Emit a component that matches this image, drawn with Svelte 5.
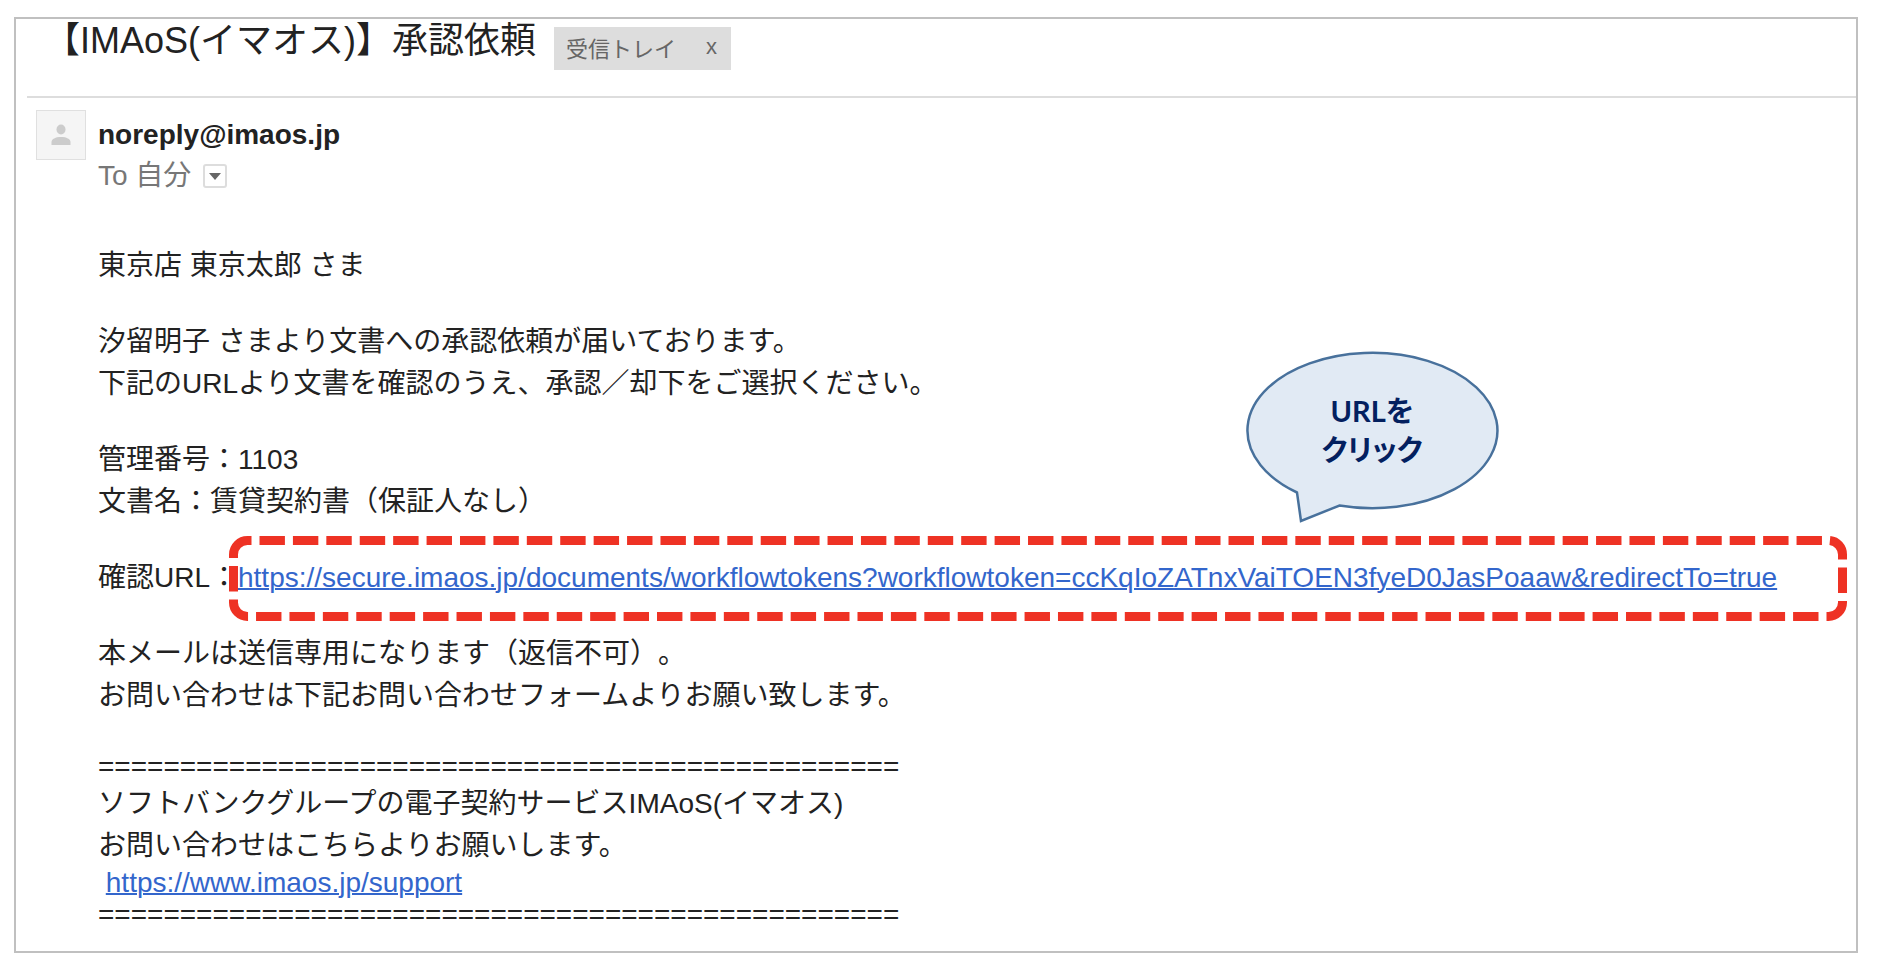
<script>
  const subject = '【IMAoS(イマオス)】承認依頼'
  const tokenUrl =
    'https://secure.imaos.jp/documents/workflowtokens?workflowtoken=ccKqIoZATnxVaiTOEN3fyeD0JasPoaaw&redirectTo=true'
  const supportUrl = 'https://www.imaos.jp/support'
  const rule = '='.repeat(49)

  const intro = [
    ['東京店 東京太郎 さま'],
    ['汐留明子 さまより文書への承認依頼が届いております。', '下記のURLより文書を確認のうえ、承認／却下をご選択ください。'],
    ['管理番号：1103', '文書名：賃貸契約書（保証人なし）'],
  ]
  const notice = ['本メールは送信専用になります（返信不可）。', 'お問い合わせは下記お問い合わせフォームよりお願い致します。']

  let labelled = true
</script>

<main class="mail">
  <header class="subject">
    <h1>{subject}</h1>
    {#if labelled}
      <span class="label">
        受信トレイ
        <button class="remove" aria-label="ラベルを削除" on:click={() => (labelled = false)}>x</button>
      </span>
    {/if}
  </header>

  <section class="sender">
    <div class="avatar">
      <svg viewBox="0 0 24 24" width="24" height="24">
        <ellipse cx="12" cy="6.5" rx="4.5" ry="5" />
        <path d="M2.500 22v-3c0-3 4-5 9.500-5s9.500 2 9.500 5v3z" />
      </svg>
    </div>
    <div class="who">
      <strong>noreply@imaos.jp</strong>
      <div class="to">
        To 自分
        <button class="details" aria-label="詳細を表示">
          <svg viewBox="0 0 12 8" width="12" height="8"><path d="M0 1h12L6 8z" /></svg>
        </button>
      </div>
    </div>
  </section>

  <article class="body">
    {#each intro as lines}
      <p>
        {#each lines as line}
          <span class="line">{line}</span>
        {/each}
      </p>
    {/each}

    <div class="confirm">
      確認URL：<a href={tokenUrl}>{tokenUrl}</a>
      <svg class="highlight"><rect x="4.500" y="4.500" rx="14" ry="14" pathLength="3344" /></svg>
      <div class="bubble">
        <svg viewBox="0 0 252 172" width="252" height="172">
          <path d="M51 141.500A125 77.700 0 1 1 93.500 154.500L55 170z" />
        </svg>
        <div class="bubble-text">URLを<br />クリック</div>
      </div>
    </div>

    <p>
      {#each notice as line}
        <span class="line">{line}</span>
      {/each}
    </p>

    <footer>
      <span class="line short">{rule}</span>
      <span class="line">ソフトバンクグループの電子契約サービスIMAoS(イマオス)</span>
      <span class="line">お問い合わせはこちらよりお願いします。</span>
      <span class="line short">&nbsp;<a href={supportUrl}>{supportUrl}</a></span>
      <span class="line short">{rule}</span>
    </footer>
  </article>
</main>

<style>
  :global(body) {
    margin: 0;
    background: #fff;
  }
  .mail {
    box-sizing: border-box;
    margin: 17px 42px 20px 14px;
    padding-bottom: 20px;
    border: 2px solid #c0c0c0;
    font-family: 'Liberation Sans', 'Noto Sans CJK JP', sans-serif;
    font-size: 28px;
    text-spacing-trim: space-all;
    color: #222;
  }
  .subject {
    display: flex;
    align-items: flex-start;
    gap: 18px;
    height: 77px;
    margin-left: 11px;
    padding-left: 17px;
    border-bottom: 2px solid #ddd;
  }
  h1 {
    margin: 0;
    font-size: 36px;
    font-weight: 400;
    line-height: 44px;
  }
  .label {
    display: flex;
    align-items: center;
    justify-content: space-between;
    box-sizing: border-box;
    width: 177px;
    height: 43px;
    margin-top: 8px;
    padding: 0 14px 4px 12px;
    font-size: 22px;
    color: #666;
    background: #ddd;
  }
  button {
    padding: 0;
    font: inherit;
    color: inherit;
    cursor: pointer;
  }
  .remove {
    border: 0;
    background: none;
  }
  .sender {
    display: flex;
    gap: 12px;
    padding: 12px 20px 0;
  }
  .avatar {
    display: flex;
    align-items: center;
    justify-content: center;
    box-sizing: border-box;
    width: 50px;
    height: 50px;
    border: 1px solid #e0e0e0;
    background: #f5f5f5;
    fill: #ccc;
  }
  .who {
    padding-top: 5px;
  }
  strong {
    display: block;
    line-height: 40px;
  }
  .to {
    display: flex;
    align-items: center;
    gap: 12px;
    line-height: 42px;
    color: #777;
  }
  .details {
    display: flex;
    align-items: center;
    justify-content: center;
    width: 24px;
    height: 24px;
    border: 2px solid #ddd;
    border-radius: 3px;
    background: #fff;
    fill: #666;
  }
  .body {
    display: flex;
    flex-direction: column;
    gap: 34px;
    margin-top: 48px;
    padding-left: 82px;
    line-height: 42px;
  }
  p {
    margin: 0;
  }
  .line {
    display: block;
    height: 42px;
  }
  .line.short {
    height: 32px;
    line-height: 32px;
  }
  a {
    color: #3366cc;
    text-decoration-thickness: 2px;
  }
  .confirm {
    position: relative;
    height: 42px;
    white-space: nowrap;
  }
  .highlight {
    position: absolute;
    top: -21px;
    left: 131px;
    width: calc(100% - 140px);
    height: 85px;
    pointer-events: none;
  }
  .highlight rect {
    width: calc(100% - 9px);
    height: calc(100% - 9px);
    fill: none;
    stroke: #ee3224;
    stroke-width: 9px;
    stroke-dasharray: 25.4 8;
    stroke-dashoffset: 21.4;
  }
  .bubble {
    position: absolute;
    bottom: 76px;
    left: 1148px;
    width: 252px;
    height: 172px;
  }
  .bubble svg {
    overflow: visible;
  }
  .bubble path {
    fill: #e1eaf4;
    stroke: #48719c;
    stroke-width: 2.5px;
    stroke-linejoin: miter;
  }
  .bubble-text {
    position: absolute;
    top: 40px;
    width: 100%;
    font-family: Lato, 'Noto Sans CJK JP', sans-serif;
    font-size: 29px;
    font-weight: 700;
    font-feature-settings: 'palt';
    line-height: 39px;
    text-align: center;
    color: #03205f;
  }
</style>
